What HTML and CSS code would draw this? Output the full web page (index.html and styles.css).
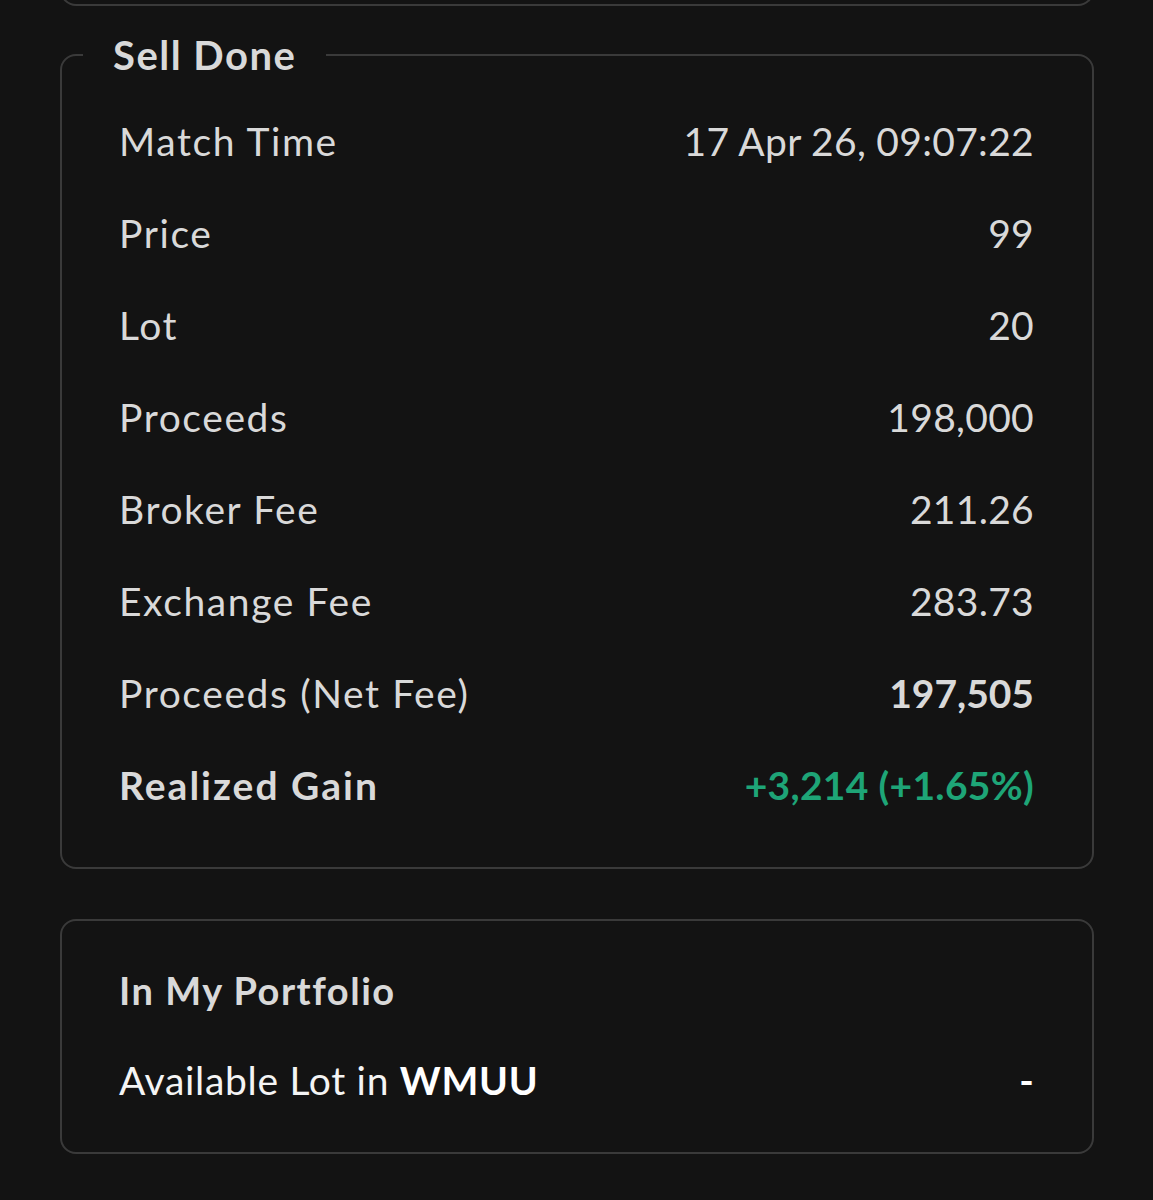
FILE: index.html
```html
<!DOCTYPE html>
<html>
<head>
<meta charset="utf-8">
<link rel="stylesheet" href="styles.css">
</head>
<body>
<div class="page">
  <div class="card card-prev"></div>
  <fieldset class="card card-detail">
    <legend class="legend">Sell Done</legend>
    <div class="rows">
      <div class="row"><span class="label">Match Time</span><span class="value">17 Apr 26, 09:07:22</span></div>
      <div class="row"><span class="label">Price</span><span class="value">99</span></div>
      <div class="row"><span class="label">Lot</span><span class="value">20</span></div>
      <div class="row"><span class="label">Proceeds</span><span class="value">198,000</span></div>
      <div class="row"><span class="label">Broker Fee</span><span class="value">211.26</span></div>
      <div class="row"><span class="label">Exchange Fee</span><span class="value">283.73</span></div>
      <div class="row"><span class="label">Proceeds (Net Fee)</span><span class="value strong">197,505</span></div>
      <div class="row"><span class="label strong">Realized Gain</span><span class="value strong gain">+3,214 (+1.65%)</span></div>
    </div>
  </fieldset>
  <div class="card card-portfolio">
    <div class="title">In My Portfolio</div>
    <div class="row row-avail"><span class="label avail">Available Lot in <b class="ticker">WMUU</b></span><span class="value dash">-</span></div>
  </div>
</div>
</body>
</html>
```
FILE: styles.css
```css
html, body {
  margin: 0;
  padding: 0;
  background: #131313;
}
body {
  font-family: Lato, "Noto Sans", sans-serif;
  color: #d9d9d9;
}
.page {
  padding: 0 59px 0 60px;
  display: flex;
  flex-direction: column;
}
.card {
  border: 2px solid #3a3a3a;
  border-radius: 16px;
  box-sizing: border-box;
}
.card-prev {
  height: 36px;
  margin-top: -30px;
  border-top: none;
  border-radius: 0 0 16px 16px;
}
.card-detail {
  margin: 29px 0 0 0;
  padding: 0 58px 36px 57px;
  min-width: 0;
}
.legend {
  margin-left: -36px;
  padding: 0 30px;
  font-size: 40px;
  font-weight: 700;
  line-height: 40px;
  letter-spacing: 1.5px;
  color: #d9d9d9;
}
.rows {
  padding-top: 20px;
  display: flex;
  flex-direction: column;
}
.row {
  height: 92px;
  display: flex;
  align-items: center;
  justify-content: space-between;
  font-size: 39px;
  line-height: 50px;
}
.label {
  letter-spacing: 1.6px;
}
.value {
  letter-spacing: 0.3px;
}
.label.strong {
  letter-spacing: 2px;
}
.value.strong {
  letter-spacing: 0;
}
.strong {
  font-weight: 700;
}
.value.gain {
  color: #1ea577;
  letter-spacing: 0.3px;
}
.card-portfolio {
  margin-top: 50px;
  padding: 44px 58px 47px 57px;
}
.title {
  font-size: 38px;
  font-weight: 700;
  line-height: 50px;
  letter-spacing: 1.5px;
  color: #d9d9d9;
}
.row-avail {
  height: 50px;
  margin-top: 40px;
}
.avail {
  color: #f4f4f4;
  letter-spacing: 0.7px;
}
.dash {
  color: #ffffff;
  font-weight: 700;
}
.ticker {
  font-weight: 700;
  color: #ffffff;
}
```
